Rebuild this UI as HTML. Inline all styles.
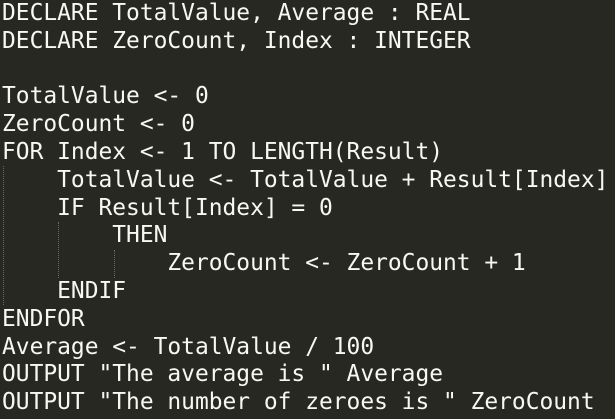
<html><head><style>
body{margin:0;background:#272822;width:615px;height:419px;overflow:hidden;position:relative}
pre{margin:0;position:absolute;left:2px;top:0px;font-family:"DejaVu Sans Mono","Liberation Mono",monospace;font-size:22.9px;line-height:27.8px;color:#f8f8f2}
.g{position:absolute;width:0;border-left:1px dotted #6a6a62}
</style></head><body>
<div class="g" style="left:3px;top:166px;height:139px"></div>
<div class="g" style="left:58px;top:222px;height:56px"></div>
<div class="g" style="left:114px;top:250px;height:28px"></div>
<pre>DECLARE TotalValue, Average : REAL
DECLARE ZeroCount, Index : INTEGER

TotalValue &lt;- 0
ZeroCount &lt;- 0
FOR Index &lt;- 1 TO LENGTH(Result)
    TotalValue &lt;- TotalValue + Result[Index]
    IF Result[Index] = 0
        THEN
            ZeroCount &lt;- ZeroCount + 1
    ENDIF
ENDFOR
Average &lt;- TotalValue / 100
OUTPUT "The average is " Average
OUTPUT "The number of zeroes is " ZeroCount</pre>
</body></html>
